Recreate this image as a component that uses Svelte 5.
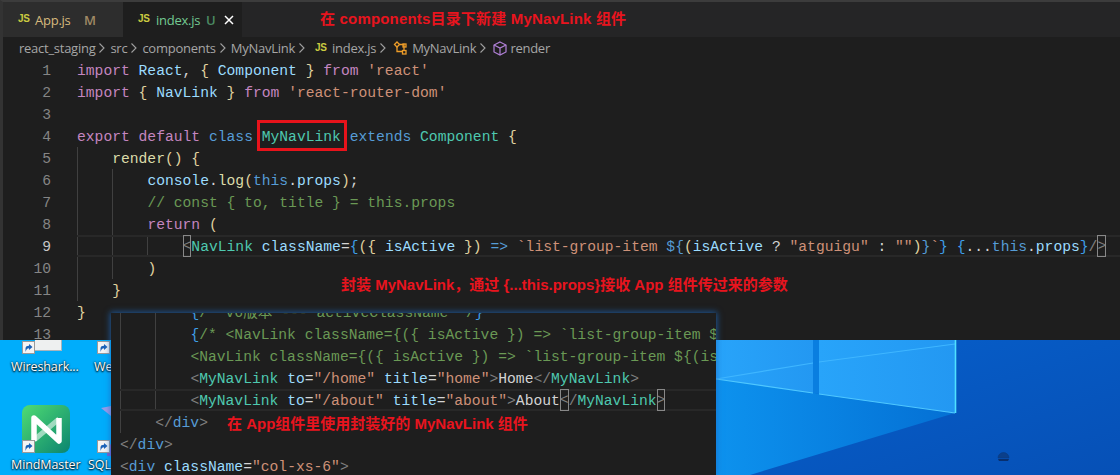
<script>
  const t = (c, s) => ({ c, s });
  const main = [
    [0, [t('k','import'),t('w',' '),t('v','React'),t('w',', '),t('y','{'),t('v',' Component '),t('y','}'),t('w',' '),t('k','from'),t('w',' '),t('s',"'react'")]],
    [0, [t('k','import'),t('w',' '),t('y','{'),t('v',' NavLink '),t('y','}'),t('w',' '),t('k','from'),t('w',' '),t('s',"'react-router-dom'")]],
    [0, []],
    [0, [t('k','export'),t('w',' '),t('k','default'),t('w',' '),t('b','class'),t('w',' '),t('c','MyNavLink'),t('w',' '),t('b','extends'),t('w',' '),t('c','Component'),t('w',' '),t('y','{')]],
    [1, [t('f','render'),t('y','()'),t('w',' '),t('y','{')]],
    [2, [t('v','console'),t('w','.'),t('f','log'),t('y','('),t('b','this'),t('w','.'),t('v','props'),t('y',')'),t('w',';')]],
    [2, [t('g','// const { to, title } = this.props')]],
    [2, [t('k','return'),t('w',' '),t('y','(')]],
    [3, [t('box','<'),t('c','NavLink'),t('w',' '),t('v','className'),t('w','='),t('l','{'),t('y','('),t('y','{'),t('v',' isActive '),t('y','}'),t('y',')'),t('w',' '),t('b','=>'),t('w',' '),t('s','`list-group-item '),t('b','${'),t('y','('),t('v','isActive'),t('w',' ? '),t('s','"atguigu"'),t('w',' : '),t('s','""'),t('y',')'),t('b','}'),t('s','`'),t('l','}'),t('w',' '),t('l','{'),t('w','...'),t('b','this'),t('w','.'),t('v','props'),t('l','}'),t('d','/'),t('box','>')]],
    [2, [t('y',')')]],
    [1, [t('y','}')]],
    [0, [t('y','}')]],
    [0, []]
  ];
  const over = [
    [2, [t('l','{'),t('g','/* v6版本 --- activeClassName */'),t('l','}')]],
    [2, [t('l','{'),t('g',"/* <NavLink className={({ isActive }) => `list-group-item ${(isActive ? 'atguigu' : '')}`} */")]],
    [2, [t('g',"<NavLink className={({ isActive }) => `list-group-item ${(isActive ? 'atguigu' : '')}`}")]],
    [2, [t('d','<'),t('c','MyNavLink'),t('w',' '),t('v','to'),t('w','='),t('s','"/home"'),t('w',' '),t('v','title'),t('w','='),t('s','"home"'),t('d','>'),t('w','Home'),t('d','</'),t('c','MyNavLink'),t('d','>')]],
    [2, [t('d','<'),t('c','MyNavLink'),t('w',' '),t('v','to'),t('w','='),t('s','"/about"'),t('w',' '),t('v','title'),t('w','='),t('s','"about"'),t('d','>'),t('w','About'),t('box','<'),t('d','/'),t('c','MyNavLink'),t('box','>')]],
    [1, [t('d','</'),t('b','div'),t('d','>')]],
    [0, [t('d','</'),t('b','div'),t('d','>')]],
    [0, [t('d','<'),t('b','div'),t('w',' '),t('v','className'),t('w','='),t('s','"col-xs-6"'),t('d','>')]]
  ];
</script>

{#snippet chevron()}
  <svg class="chev" width="8" height="12" viewBox="0 0 8 12"><path d="M1.500 1.500 6 6l-4.500 4.500" fill="none" stroke="#a0a0a0" stroke-width="1.100"/></svg>
{/snippet}

{#snippet shortcut()}
  <svg class="shortcut" width="13" height="13" viewBox="0 0 13 13"><rect x=".5" y=".5" width="12" height="12" fill="#f4f4f4" stroke="#9a9a9a"/><path d="M3.500 11V7.500C3.500 5.500 5 4.800 7 4.800V3l3.500 3L7 9V7.200C5.400 7.200 4.400 8.200 3.500 11z" fill="#1b62b8"/></svg>
{/snippet}

{#snippet codeLine(indent, toks, n, active, guides)}
  <div class="line" class:active>
    {#if n !== null}<span class="num" class:cur={active}>{n}</span>{/if}
    {#each Array(indent) as _, i}
      <span class="ind" class:guide={guides > i}></span>
    {/each}
    <span class="code">{#each toks as k}<span class={k.c}>{k.s}</span>{/each}</span>
  </div>
{/snippet}

<div class="screen">
  <div class="vscode">
    <div class="tabs">
      <div class="tab app">
        <span class="js">JS</span><span class="tname mod">App.js</span><span class="badge bm">M</span>
      </div>
      <div class="tab cur">
        <span class="js wide">JS</span><span class="tname new">index.js</span><span class="badge bu">U</span>
        <svg class="close" width="10" height="10" viewBox="0 0 10 10"><path d="M1 1l8 8M9 1L1 9" stroke="#fff" stroke-width="1.500"/></svg>
      </div>
    </div>
    <div class="crumbs">
      <span>react_staging</span>{@render chevron()}
      <span>src</span>{@render chevron()}
      <span>components</span>{@render chevron()}
      <span>MyNavLink</span>{@render chevron()}
      <span class="js sm">JS</span><span>index.js</span>{@render chevron()}
      <svg class="sym" width="16" height="15" viewBox="0 0 16 15"><g fill="none" stroke="#ee9d28" stroke-width="1.300"><path d="M1.500 3.500 4 1l2.500 2.500L4 6z"/><path d="M6 3.500h5V10"/><path d="M4 6v4.500h5"/><rect x="9.500" y="9.500" width="3.500" height="3.500"/><rect x="10" y="3" width="3" height="3"/></g></svg>
      <span>MyNavLink</span>{@render chevron()}
      <svg class="sym" width="14" height="15" viewBox="0 0 14 15"><g fill="none" stroke="#b180d7" stroke-width="1.200"><path d="M7 1l6 3v7l-6 3-6-3V4z"/><path d="M1 4l6 3 6-3M7 7v7"/></g></svg>
      <span>render</span>
    </div>
    <div class="editor">
      {#each main as [ind, toks], i}
        {@render codeLine(ind, toks, i + 1, i === 8, ind)}
      {/each}
    </div>
  </div>

  <div class="desktop">
    <div class="icons">
      <div class="stub"></div>
      <span class="sc s1">{@render shortcut()}</span>
      <span class="sc s2">{@render shortcut()}</span>
      <span class="lbl l1">Wireshark...</span>
      <span class="lbl l2">We</span>
      <svg class="mind" width="48" height="48" viewBox="0 0 48 48">
        <defs><linearGradient id="mm" x1="0" y1="0" x2="1" y2="1"><stop offset="0" stop-color="#4fdc72"/><stop offset="1" stop-color="#0b8470"/></linearGradient></defs>
        <rect width="48" height="48" rx="8" fill="url(#mm)"/>
        <path d="M37 14 12 35" stroke="#fff" stroke-opacity=".55" stroke-width="5" fill="none"/>
        <path d="M12 36V13l25 23V13" stroke="#fff" stroke-width="5.500" fill="none" stroke-linejoin="round"/>
      </svg>
      <svg class="wedge" width="10" height="50" viewBox="0 0 10 50"><path d="M0 2 10 0v10z" fill="#9a9be8"/><path d="M10 38v12H6c0-6 1-10 4-12z" fill="#7a5fd0"/></svg>
      <span class="sc s3">{@render shortcut()}</span>
      <span class="sc s4">{@render shortcut()}</span>
      <span class="lbl l3">MindMaster</span>
      <span class="lbl l4">SQL</span>
    </div>
    <svg class="wall" width="404" height="135" viewBox="0 0 404 135">
      <defs>
        <linearGradient id="wd" x1="0" y1="0" x2="1" y2="1"><stop offset="0" stop-color="#0660cc"/><stop offset="1" stop-color="#0650b6"/></linearGradient>
        <linearGradient id="wl" x1="0" y1="0" x2="1" y2="0"><stop offset="0" stop-color="#0d92ee"/><stop offset="1" stop-color="#0470d4"/></linearGradient>
        <linearGradient id="wp" x1="0" y1="0" x2="1" y2="0"><stop offset="0" stop-color="#28a4fa"/><stop offset="1" stop-color="#2398f2"/></linearGradient>
      </defs>
      <rect width="404" height="135" fill="url(#wd)"/>
      <path d="M0 39 239 73 34 135H0z" fill="url(#wl)"/>
      <path d="M0 0h97v53L0 39z" fill="url(#wp)"/>
      <path d="M103 0h136v73L103 54z" fill="url(#wp)"/>
      <path d="M97 0h6v54l-6-1z" fill="#0a7ee0"/>
      <path d="M0 39 97 23M103 22 239 4" stroke="#3fb6ff" stroke-width="1.200" fill="none"/>
      <path d="M0 39 97 53M103 54 239 73" stroke="#4fc8ff" stroke-width="1.200" fill="none"/>
      <path d="M239.500 0v73" stroke="#4fe0ff" stroke-width="1.600"/>
      <path d="M282 118a5.500 5.500 0 0 1 11 0h-11z" fill="#0b3f8a" stroke="#0a3a80" stroke-width=".6"/>
      <path d="M282 119h11l-1 2h-9z" fill="#082f6e"/>
    </svg>
  </div>

  <div class="window">
    <div class="winlines">
      {#each over as [ind, toks], i}
        {@render codeLine(ind, toks, null, i === 4, ind)}
      {/each}
    </div>
  </div>

  <div class="redbox"></div>
  <span class="note n1">在 components目录下新建 MyNavLink 组件</span>
  <span class="note n2">封装 MyNavLink，通过 &#123;...this.props&#125;接收 App 组件传过来的参数</span>
  <span class="note n3">在 App组件里使用封装好的 MyNavLink 组件</span>
</div>

<style>
  :global(body) { margin: 0; background: #1e1e1e; }
  .screen {
    position: relative; width: 1120px; height: 475px; overflow: hidden;
    display: flex; flex-direction: column;
    font-family: "Open Sans", "Liberation Sans", sans-serif;
  }
  .vscode {
    height: 340px; flex: none; overflow: hidden; box-sizing: border-box;
    background: #1e1e1e; border-top: 2px solid #3c3c3c; border-left: 3px solid #333;
  }
  .tabs { display: flex; height: 35px; background: #252526; }
  .tab {
    display: flex; align-items: center; box-sizing: border-box; height: 35px;
    width: 120px; padding-left: 15px; font-size: 13px; letter-spacing: -0.25px;
  }
  .tab.app { background: #2d2d2d; }
  .tab.cur { background: #1e1e1e; width: 119px; padding-left: 15px; }
  .js { color: #cbcb41; font: bold 10px "Liberation Sans", sans-serif; width: 17px; flex: none; position: relative; top: -1px; }
  .js.wide { width: 18px; }
  .js.sm { width: 14px; margin-left: 5px; }
  .tname.mod { color: #d7ba7d; width: 49px; }
  .tname.new { color: #73c991; width: 50px; }
  .badge { font-size: 13px; font-weight: 600; }
  .bm { color: #a08a66; }
  .bu { color: #4b8a62; margin-right: 9px; }
  .close { flex: none; }
  .crumbs {
    height: 22px; display: flex; align-items: center; padding-left: 16px; gap: 3px;
    font-size: 13px; letter-spacing: -0.26px; color: #a6a6a6; white-space: nowrap;
  }
  .chev { flex: none; margin-right: 1px; }
  .sym { flex: none; margin-left: 2px; }
  .editor { display: flex; flex-direction: column; padding-left: 74px; }
  .line {
    position: relative; display: flex; height: 22px; line-height: 22px; white-space: pre; flex: none;
    font-family: "Liberation Mono", "Noto Sans CJK SC", monospace; font-size: 14.67px; color: #d4d4d4;
  }
  .line.active::after {
    content: ""; position: absolute; inset: 0; border-top: 2px solid #282828; border-bottom: 2px solid #282828;
    pointer-events: none;
  }
  .num { position: absolute; right: 100%; top: 1px; margin-right: 26px; color: #858585; }
  .num.cur { color: #c6c6c6; }
  .ind { flex: none; width: 35.2px; box-sizing: border-box; }
  .ind.guide { border-left: 1px solid #404040; }
  .code { position: relative; top: 1px; z-index: 1; }
  .k { color: #c586c0; } .v { color: #9cdcfe; } .c { color: #4ec9b0; } .s { color: #ce9178; }
  .b { color: #569cd6; } .f { color: #dcdcaa; } .y { color: #e0d3a0; } .l { color: #3f9fe8; }
  .g { color: #6a9955; } .w { color: #d4d4d4; } .d { color: #808080; }
  .box {
    color: #808080; outline: 1px solid #888; outline-offset: -1px;
    display: inline-block; height: 22px; vertical-align: top; position: relative; top: -1px;
  }
  .desktop { flex: 1; display: flex; justify-content: space-between; background: #00adfb; }
  .icons { position: relative; width: 111px; height: 135px; }
  .stub { position: absolute; left: 35px; top: 0; width: 26px; height: 10px; background: #eef0f0; border: solid #a8b4bc; border-width: 0 1px 1px 0; }
  .sc { position: absolute; line-height: 0; }
  .s1 { left: 22px; top: 1px; } .s2 { left: 97px; top: 1px; }
  .s3 { left: 22px; top: 100px; } .s4 { left: 97px; top: 100px; }
  .lbl { position: absolute; color: #fff; font: 12.5px "Open Sans", sans-serif; letter-spacing: -.1px; text-shadow: 0 1px 2px #000, 0 0 2px #000; white-space: nowrap; }
  .l1 { left: 11px; top: 18px; } .l2 { left: 94px; top: 18px; }
  .l3 { left: 11px; top: 116px; } .l4 { left: 88px; top: 116px; }
  .mind { position: absolute; left: 22px; top: 65px; }
  .wedge { position: absolute; left: 101px; top: 66px; }
  .wall { flex: none; display: block; }
  .window {
    position: absolute; left: 111px; top: 313px; width: 605px; height: 162px; overflow: hidden;
    background: #1e1e1e; box-shadow: 0 0 6px 1px rgba(30, 110, 200, .7);
  }
  .winlines { margin-top: -12px; padding-left: 9px; display: flex; flex-direction: column; }
  .redbox {
    position: absolute; left: 257px; top: 120px; width: 84px; height: 25px;
    border: 3px solid #e8131b;
  }
  .note {
    position: absolute; color: #e8141e; font: bold 15px "Liberation Sans", "Noto Sans CJK SC", sans-serif;
    line-height: 18px; white-space: nowrap; z-index: 2;
  }
  .n1 { left: 320px; top: 10px; letter-spacing: .18px; }
  .n2 { left: 341px; top: 276px; }
  .n3 { left: 227px; top: 415px; }
</style>
